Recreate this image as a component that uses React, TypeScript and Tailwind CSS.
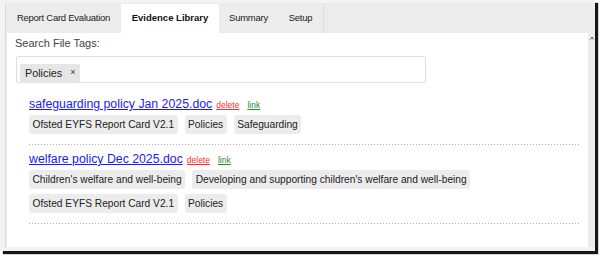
import React from 'react';

type FileItem = {
    name: string;
    tags: string[];
};

const files: FileItem[] = [
    {
        name: 'safeguarding policy Jan 2025.doc',
        tags: ['Ofsted EYFS Report Card V2.1', 'Policies', 'Safeguarding'],
    },
    {
        name: 'welfare policy Dec 2025.doc',
        tags: [
            "Children's welfare and well-being",
            "Developing and supporting children's welfare and well-being",
            'Ofsted EYFS Report Card V2.1',
            'Policies',
        ],
    },
];

const tabs = [
    { label: 'Report Card Evaluation', width: 'w-[115px]' },
    { label: 'Evidence Library', width: 'w-[98px]', active: true },
    { label: 'Summary', width: 'w-[59px]' },
    { label: 'Setup', width: 'w-[45px]' },
];

const App: React.FC = () => {
    return (
        <div className="w-[602px] h-[258px] bg-white font-['Liberation_Sans',Arial,sans-serif]">
            {/* window with the snip shadow */}
            <div className="relative w-[595px] h-[251px] bg-[#f3f3f3] shadow-[3px_3px_1px_#161616] pt-[3px] pl-[5px]">
                <div className="w-[590px] h-[244px] bg-[#ececec] border-l border-[#dadada] flex flex-col">
                    {/* Tabs */}
                    <div className="flex h-[30px] shrink-0">
                        {tabs.map((t) => (
                            <div
                                key={t.label}
                                className={`${t.width} flex items-center justify-center text-[9.5px] ${
                                    t.active
                                        ? 'bg-white font-bold text-[#111] mt-[1px]'
                                        : 'text-[#222] tracking-[-0.25px]'
                                }`}
                            >
                                {t.label}
                            </div>
                        ))}
                        <div className="w-px bg-[#dcdcdc]" />
                    </div>

                    {/* Panel */}
                    <div className="w-[581px] flex-1 bg-white ml-px pt-[3px]">
                        <div className="pl-[8px] text-[11px] leading-[14px] text-[#444]">Search File Tags:</div>
                        <div className="ml-[9px] mt-[6px] w-[410px] h-[27px] border border-[#dedede] rounded-[2px] pl-[3px] pt-[3px]">
                            <span className="inline-flex items-center h-[19px] w-[60px] bg-[#e6e6e6] rounded-[2px] pl-[5px] text-[10.8px] text-[#222]">
                                Policies
                                <span className="ml-[8px] text-[9px] text-[#333]">×</span>
                            </span>
                        </div>

                        <div className="ml-[22px] mr-[7px] mt-[14px]">
                            {files.map((f, i) => (
                                <div key={f.name} className={i > 0 ? 'mt-[7px]' : ''}>
                                    <div className="flex items-baseline h-[14px] leading-[14px]">
                                        <a href="#" className="text-[12.3px] text-[#1a1aff] underline">
                                            {f.name}
                                        </a>
                                        <a href="#" className="ml-[4px] text-[8.5px] text-[#ff2a2a] underline">
                                            delete
                                        </a>
                                        <a href="#" className="ml-[8px] text-[8.5px] text-[#2a8a2a] underline">
                                            link
                                        </a>
                                    </div>
                                    <div className="mt-[4px] flex flex-wrap gap-x-[7px] gap-y-[5px]">
                                        {f.tags.map((tag) => (
                                            <span
                                                key={tag}
                                                className="h-[19px] leading-[19px] px-[3.5px] bg-[#ececec] rounded-[3px] text-[10.2px] text-[#222]"
                                            >
                                                {tag}
                                            </span>
                                        ))}
                                    </div>
                                    <div className="mt-[10px] h-px bg-[linear-gradient(to_right,#b0b0b0_1px,transparent_1px)] bg-[length:3px_1px]" />
                                </div>
                            ))}
                        </div>
                    </div>
                </div>

                {/* tiny scroll caret on the right strip */}
                <svg className="absolute left-[590px] top-[36px]" width="4" height="4" viewBox="0 0 4 4">
                    <path d="M0.5 3.5 L2 1 L3.5 3.5" fill="none" stroke="#444" strokeWidth="0.9" />
                </svg>
            </div>
        </div>
    );
};

export default App;
